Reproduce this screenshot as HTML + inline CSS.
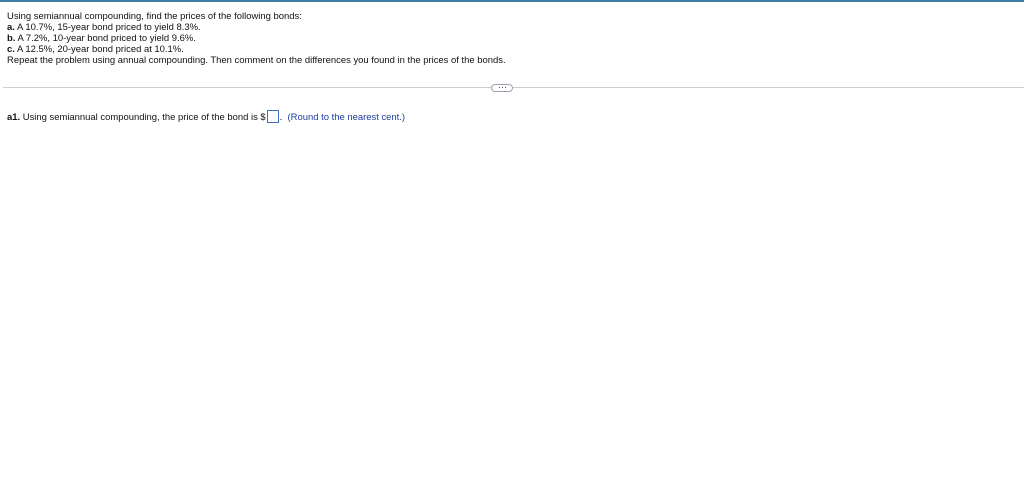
<!DOCTYPE html>
<html><head><meta charset="utf-8"><style>
body{margin:0;width:1024px;height:480px;background:#fff;font-family:"Liberation Sans",Arial,sans-serif;font-size:9.45px;color:#111;position:relative;overflow:hidden}
.top{position:absolute;left:0;top:0;width:1024px;height:2px;background:#3d7ea3}
.q{position:absolute;left:7px;top:11px;line-height:11px}
.hr{position:absolute;left:3px;right:0;top:87px;height:1px;background:#d0cccc}
.btn{position:absolute;left:491px;top:84px;width:20px;height:6px;border:1px solid #9aa3ad;border-radius:4px;background:#fff}
.btn i{position:absolute;top:2px;width:1px;height:1px;background:#555}
.a{position:absolute;left:7px;top:110px;line-height:12px}
.box{display:inline-block;width:10px;height:11px;border:1px solid #3f6fc0;vertical-align:-3px;margin:0 1px}
.blue{color:#1a3ea0}
</style></head><body>
<div class="top"></div>
<div class="q">Using semiannual compounding, find the prices of the following bonds:<br>
<b>a.</b> A 10.7%, 15-year bond priced to yield 8.3%.<br>
<b>b.</b> A 7.2%, 10-year bond priced to yield 9.6%.<br>
<b>c.</b> A 12.5%, 20-year bond priced at 10.1%.<br>
Repeat the problem using annual compounding. Then comment on the differences you found in the prices of the bonds.</div>
<div class="hr"></div>
<div class="btn"><i style="left:7px"></i><i style="left:10px"></i><i style="left:13px"></i></div>
<div class="a"><b>a1.</b> Using semiannual compounding, the price of the bond is $<span class="box"></span>. &nbsp;<span class="blue">(Round to the nearest cent.)</span></div>
</body></html>
